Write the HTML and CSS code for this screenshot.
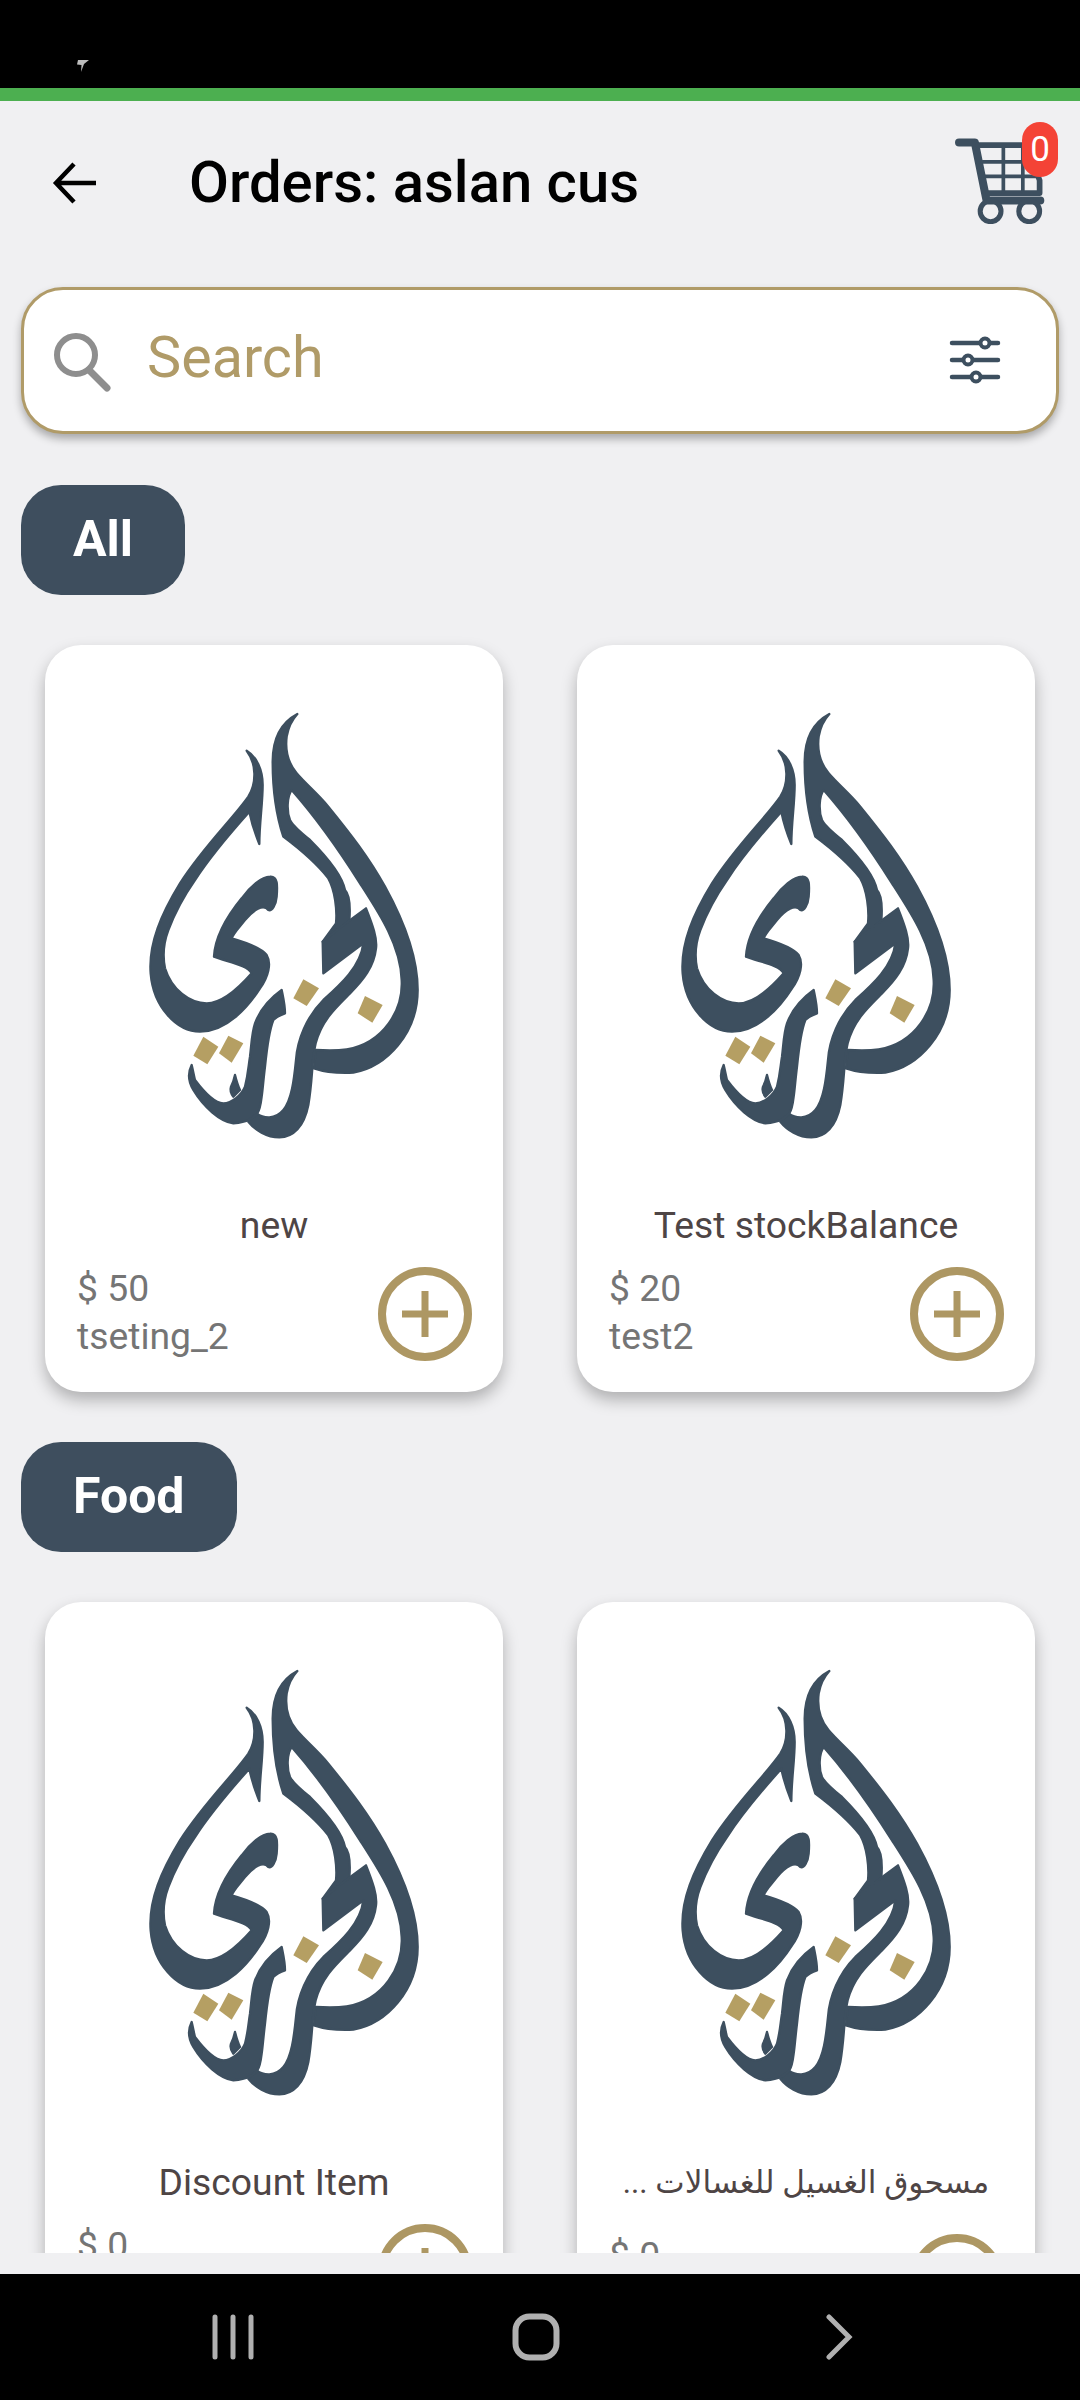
FILE: index.html
```html
<!DOCTYPE html>
<html lang="en">
<head>
<meta charset="utf-8">
<title>Orders</title>
<link rel="stylesheet" href="styles.css">
</head>
<body>
<svg class="defs" width="0" height="0" aria-hidden="true">
  <symbol id="logo" viewBox="0 0 960 1440">
    <g fill="#3d4f5f" stroke="#3d4f5f" stroke-width="7" stroke-linejoin="round">
      <path d="M532 72C498 90 458 130 458 215C458 300 470 380 490 440C530 470 590 520 625 565C645 600 652 660 648 700L608 755L688 692C692 640 685 610 675 600C665 550 615 495 570 450C545 430 520 410 510 390C500 365 500 320 515 300C590 385 660 485 720 580C775 665 842 765 845 870C850 960 790 1060 680 1078C650 1083 620 1082 587 1080L582 1135C620 1148 660 1150 700 1148C800 1130 893 1030 893 900C893 800 850 690 795 590C745 500 690 430 625 350C590 308 560 285 530 250C505 220 495 180 500 140C505 110 520 85 532 72Z"/>
      <path d="M688 692L738 655C758 705 772 745 768 775C762 830 730 870 690 910C650 950 605 990 587 1060C575 1110 578 1170 565 1245C552 1310 520 1342 478 1342C440 1342 405 1320 385 1295L410 1270C430 1285 465 1290 490 1260C515 1230 522 1170 528 1110C532 1050 560 980 610 930C660 885 722 830 730 760L610 850L608 755Z"/>
      <path d="M380 182C410 200 428 240 428 285C428 340 418 400 418 462C405 430 395 400 388 365C330 430 270 500 225 570C190 620 160 680 145 720C128 765 128 800 135 835C155 900 210 940 260 940C310 940 360 890 395 850C385 825 320 815 282 800C285 745 320 680 365 625C390 590 425 560 450 560C475 558 472 590 470 620C468 645 455 665 445 660C430 640 400 660 375 690C355 715 340 730 335 745C370 755 420 770 440 795C455 820 445 860 420 895C385 950 320 1025 240 1025C170 1025 100 950 92 850C85 760 125 670 180 580C250 470 340 385 385 320C410 280 410 220 380 182Z"/>
      <path d="M485 900C490 925 495 945 495 970C480 975 465 985 460 990C448 1020 440 1080 435 1130C430 1170 428 1200 425 1220C422 1245 418 1262 412 1270C400 1285 385 1295 340 1300C300 1295 250 1250 220 1200C208 1180 200 1155 215 1125C220 1145 222 1160 225 1170C240 1190 280 1240 310 1240C335 1240 365 1215 375 1190C385 1150 385 1130 390 1100C395 1060 395 1030 405 1000C420 960 450 925 485 900Z"/>
      <path d="M345 1155C350 1175 355 1190 360 1200L340 1220C332 1210 330 1200 333 1190C338 1180 342 1170 345 1155Z"/>
    </g>
    <g fill="#b59f63">
      <path d="M550 868L597 895L560 948L520 925Z"/>
      <path d="M735 918L788 945L757 998L713 970Z"/>
      <path d="M250 1040L295 1070L262 1123L220 1097Z"/>
      <path d="M325 1037L370 1060L335 1118L297 1090Z"/>
    </g>
  </symbol>
  <symbol id="plus" viewBox="0 0 94 94">
    <circle cx="47" cy="47" r="43" fill="none" stroke="#ad9763" stroke-width="8"/>
    <path d="M24 47H70M47 24V70" stroke="#ad9763" stroke-width="7" fill="none"/>
  </symbol>
</svg>
<div class="screen">
  <div class="status">
    <svg class="bolt" width="12" height="14" viewBox="0 0 12 14"><path d="M1 1H12L7 5L4 13L4.500 6L0 5.500Z" fill="#bdbdbd"/></svg>
  </div>
  <div class="accent"></div>
  <main class="content">
    <header class="topbar">
      <svg class="back" width="46" height="44" viewBox="0 0 46 44"><path d="M44 22H5M22 3L4 22L22 41" fill="none" stroke="#000" stroke-width="4.500"/></svg>
      <h1 class="title">Orders: aslan cus</h1>
      <div class="cart">
        <svg width="94" height="94" viewBox="100 90 280 280">
          <g fill="none" stroke="#3d4f5f" stroke-linecap="round" stroke-linejoin="round">
            <path d="M118 127H165L200 300H360" stroke-width="24"/>
            <path d="M175 135H320L358 240V278H205" stroke-width="17"/>
            <path d="M188 185H345M195 228H350M250 135V275M308 135V275" stroke-width="11"/>
            <circle cx="212" cy="332" r="31" stroke-width="15"/>
            <circle cx="327" cy="332" r="31" stroke-width="15"/>
          </g>
        </svg>
        <span class="badge">0</span>
      </div>
    </header>
    <div class="search">
      <svg class="search-icon" width="60" height="60" viewBox="0 0 60 60"><circle cx="24" cy="23" r="19" fill="none" stroke="#8e8e8e" stroke-width="6"/><path d="M37 38L55 56" stroke="#8e8e8e" stroke-width="7" stroke-linecap="round"/></svg>
      <span class="placeholder">Search</span>
      <svg class="filter-icon" width="54" height="48" viewBox="0 0 54 48"><g stroke="#3d4f5f" stroke-width="4.500" stroke-linecap="round"><path d="M5 7H51M5 24H51M5 41H51"/></g><g fill="#fff" stroke="#3d4f5f" stroke-width="4"><circle cx="38" cy="7" r="4.500"/><circle cx="21" cy="24" r="4.500"/><circle cx="29" cy="41" r="4.500"/></g></svg>
    </div>

    <section class="group">
      <div class="chip">All</div>
      <div class="grid">
        <article class="card">
          <svg class="logo" width="320" height="480"><use href="#logo"/></svg>
          <div class="name">new</div>
          <div class="row">
            <div class="info"><div>$ 50</div><div>tseting_2</div></div>
            <svg class="add" width="94" height="94"><use href="#plus"/></svg>
          </div>
        </article>
        <article class="card">
          <svg class="logo" width="320" height="480"><use href="#logo"/></svg>
          <div class="name">Test stockBalance</div>
          <div class="row">
            <div class="info"><div>$ 20</div><div>test2</div></div>
            <svg class="add" width="94" height="94"><use href="#plus"/></svg>
          </div>
        </article>
      </div>
    </section>

    <section class="group">
      <div class="chip">Food</div>
      <div class="grid">
        <article class="card">
          <svg class="logo" width="320" height="480"><use href="#logo"/></svg>
          <div class="name">Discount Item</div>
          <div class="row">
            <div class="info"><div>$ 0</div></div>
            <svg class="add" width="94" height="94"><use href="#plus"/></svg>
          </div>
        </article>
        <article class="card">
          <svg class="logo" width="320" height="480"><use href="#logo"/></svg>
          <div class="name name-ar" dir="rtl">مسحوق الغسيل للغسالات ...</div>
          <div class="row">
            <div class="info"><div>$ 0</div></div>
            <svg class="add" width="94" height="94"><use href="#plus"/></svg>
          </div>
        </article>
      </div>
    </section>
  </main>
  <nav class="navbar">
    <span class="nav-item"><svg width="44" height="46" viewBox="0 0 44 46"><path d="M4 3V43M22 3V43M40 3V43" stroke="#b0b0b0" stroke-width="5" stroke-linecap="round"/></svg></span>
    <span class="nav-item"><svg width="48" height="48" viewBox="0 0 48 48"><rect x="3.500" y="3.500" width="41" height="41" rx="14" fill="none" stroke="#b0b0b0" stroke-width="6"/></svg></span>
    <span class="nav-item"><svg width="30" height="46" viewBox="0 0 30 46"><path d="M5 3L25 23L5 43" fill="none" stroke="#b0b0b0" stroke-width="5" stroke-linecap="round"/></svg></span>
  </nav>
</div>
</body>
</html>
```
FILE: styles.css
```css
* { box-sizing: border-box; }
html, body { margin: 0; padding: 0; }
body { background: #f0f0f2; font-family: Roboto, "DejaVu Sans", sans-serif; }
.defs { position: absolute; }
.screen { width: 1080px; height: 2400px; display: flex; flex-direction: column; background: #f0f0f2; overflow: hidden; }
.status { height: 88px; background: #000; flex: none; padding: 59px 0 0 77px; }
.bolt { display: block; }
.accent { height: 13px; background: #4caf50; flex: none; }
.content { flex: 1; min-height: 0; margin-bottom: 21px; overflow: hidden; }

.topbar { height: 186px; display: flex; align-items: flex-start; }
.back { flex: none; margin: 60px 0 0 52px; }
.title { margin: 49px 0 0 91px; font-size: 58px; line-height: 64px; font-weight: 500; color: #000; flex: 1; white-space: nowrap; }
.cart { position: relative; flex: none; width: 94px; height: 94px; margin: 29px 33px 0 0; }
.cart svg { display: block; }
.badge { position: absolute; left: 69px; top: -8px; width: 36px; height: 55px; border-radius: 18px; background: #f44336; color: #fff; font-size: 35px; line-height: 55px; text-align: center; }

.search { margin: 0 21px; height: 147px; border: 3px solid #b09b68; border-radius: 42px; background: #fff; box-shadow: 0 5px 8px rgba(0,0,0,.3); display: flex; align-items: center; padding: 0 55px 0 28px; }
.search-icon { flex: none; margin-top: 2px; }
.placeholder { flex: 1; margin: -6px 0 0 35px; font-size: 57.500px; color: #b09b68; }
.filter-icon { flex: none; margin-top: -1px; }

.group { padding-top: 51px; }
.group + .group { padding-top: 50px; }
.chip { display: inline-block; margin-left: 21px; height: 110px; padding: 0 52px; border-radius: 40px; background: #3e4e5e; color: #fff; font-size: 50px; font-weight: 700; line-height: 108px; vertical-align: top; }
.grid { display: grid; grid-template-columns: 458px 458px; column-gap: 74px; padding: 50px 45px 0; }
.card { height: 747px; background: #fff; border-radius: 36px; box-shadow: 0 8px 16px rgba(0,0,0,.27); padding-top: 45px; }
.logo { display: block; margin-left: 75px; }
.name { margin-top: 34px; font-size: 37.300px; line-height: 42px; color: #4e4545; text-align: center; white-space: nowrap; }
.name-ar { margin-top: 31px; padding-bottom: 5px; line-height: 50px; font-size: 31.200px; }
.row { display: flex; justify-content: space-between; align-items: flex-start; padding: 0 31px 0 32px; margin-top: 18px; }
.info { font-size: 37.300px; line-height: 48px; color: #757575; }
.add { flex: none; margin-top: 3px; }

.navbar { height: 126px; flex: none; background: #000; display: grid; grid-template-columns: repeat(3, 303px); justify-content: center; align-items: center; padding-right: 8px; }
.nav-item { display: flex; justify-content: center; align-items: center; }
```
